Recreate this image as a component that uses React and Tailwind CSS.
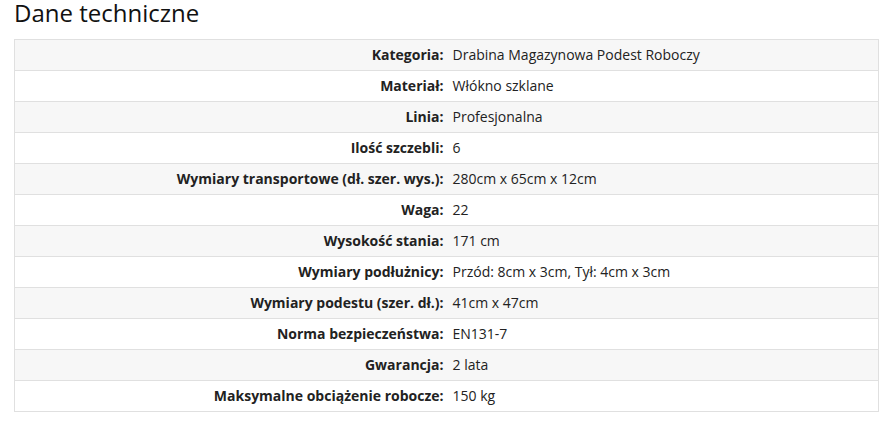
const rows = [
  ['Kategoria:', 'Drabina Magazynowa Podest Roboczy'],
  ['Materiał:', 'Włókno szklane'],
  ['Linia:', 'Profesjonalna'],
  ['Ilość szczebli:', '6'],
  ['Wymiary transportowe (dł. szer. wys.):', '280cm x 65cm x 12cm'],
  ['Waga:', '22'],
  ['Wysokość stania:', '171 cm'],
  ['Wymiary podłużnicy:', 'Przód: 8cm x 3cm, Tył: 4cm x 3cm'],
  ['Wymiary podestu (szer. dł.):', '41cm x 47cm'],
  ['Norma bezpieczeństwa:', 'EN131-7'],
  ['Gwarancja:', '2 lata'],
  ['Maksymalne obciążenie robocze:', '150 kg'],
]

export default function App() {
  return (
    <div className="bg-white w-[890px] h-[421px] pl-[14px] pr-[11px] text-[#222]" style={{ fontFamily: '"Open Sans", sans-serif' }}>
      <h2 className="text-[24px] leading-[26px] h-[39px] font-normal text-[#111]">Dane techniczne</h2>
      <table className="w-full border-collapse border border-[#e0e0e0] text-[14px]">
        <tbody>
          {rows.map(([k, v], i) => (
            <tr key={k} className={i % 2 === 0 ? 'bg-[#f7f7f7]' : 'bg-white'}>
              <td className="w-[433px] h-[31px] border-b border-[#e0e0e0] text-right font-bold pr-[4px] py-0 leading-[30px]">{k}</td>
              <td className="h-[31px] border-b border-[#e0e0e0] pl-[5px] py-0 leading-[30px]">{v}</td>
            </tr>
          ))}
        </tbody>
      </table>
    </div>
  )
}
